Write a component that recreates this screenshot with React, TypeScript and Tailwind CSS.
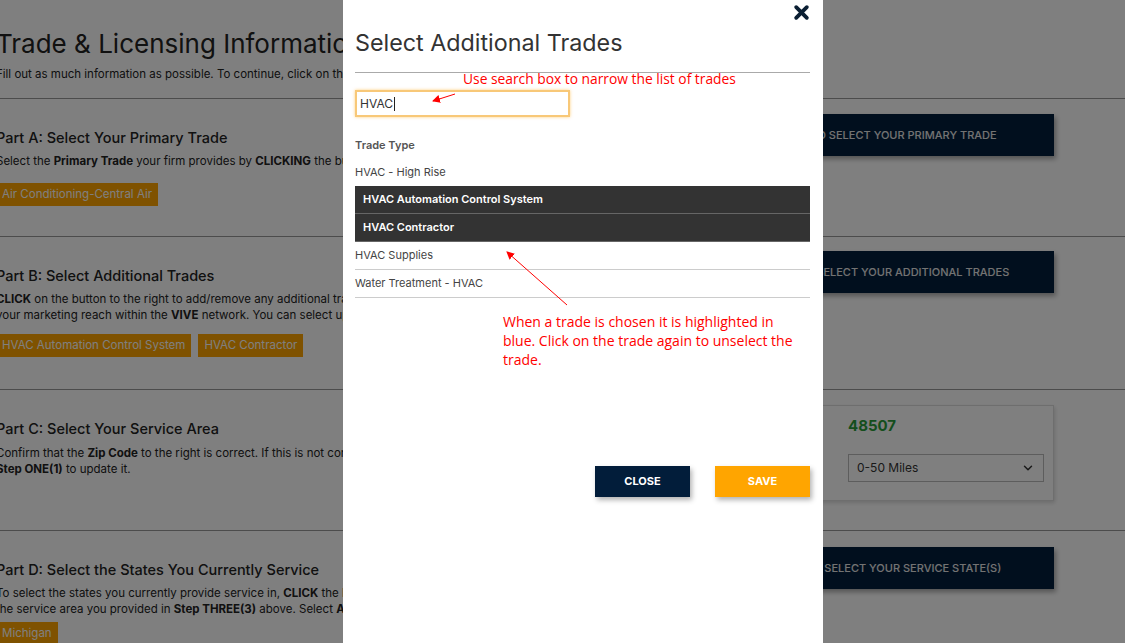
import { ChevronDown } from "lucide-react";

const font = { fontFamily: "Inter, 'Noto Sans', sans-serif" };

function Tag({ children }: { children: React.ReactNode }) {
  return (
    <span className="inline-flex h-[23px] items-center bg-[#ffa500] px-[6px] text-[11.5px] text-white">
      {children}
    </span>
  );
}

function NavyButton({ children }: { children: React.ReactNode }) {
  return (
    <button className="flex h-[42px] w-full items-center justify-center bg-[#021f3d] text-[11px] font-medium uppercase text-[#e6e6e6] shadow-[2px_3px_5px_rgba(0,0,0,0.35)]">
      {children}
    </button>
  );
}

function Background() {
  return (
    <div className="ml-[-4px] w-[1200px] bg-white text-[#222]" style={font}>
      <div className="h-[98px] pt-[29px]">
        <h1 className="text-[26px] font-normal leading-[30px]">Trade &amp; Licensing Information</h1>
        <p className="mt-[7px] text-[11.5px] leading-[16px]">
          Fill out as much information as possible. To continue, click on the <b>NEXT</b> button at the bottom of the page.
        </p>
      </div>

      <section className="flex h-[138px] border-t border-[#999]">
        <div className="w-[690px] pt-[29px]">
          <h2 className="text-[14.5px] font-medium leading-[20px]">Part A: Select Your Primary Trade</h2>
          <p className="mt-[5px] text-[11.5px] leading-[16px]">
            Select the <b>Primary Trade</b> your firm provides by <b>CLICKING</b> the button to the right.
          </p>
          <div className="mt-[11px]">
            <Tag>Air Conditioning-Central Air</Tag>
          </div>
        </div>
        <div className="w-[368px] pt-[15px]">
          <NavyButton>Click here to select your primary trade</NavyButton>
        </div>
      </section>

      <section className="flex h-[153px] border-t border-[#999]">
        <div className="w-[690px] pt-[29px]">
          <h2 className="text-[14.5px] font-medium leading-[20px]">Part B: Select Additional Trades</h2>
          <p className="mt-[5px] text-[11.5px] leading-[16px]">
            <b>CLICK</b> on the button to the right to add/remove any additional trades to increase
            <br />
            your marketing reach within the <b>VIVE</b> network. You can select up to five trades.
          </p>
          <div className="mt-[11px] flex gap-[7px]">
            <Tag>HVAC Automation Control System</Tag>
            <Tag>HVAC Contractor</Tag>
          </div>
        </div>
        <div className="w-[368px] pt-[14px]">
          <NavyButton>Click here to select your additional trades</NavyButton>
        </div>
      </section>

      <section className="flex h-[141px] border-t border-[#999]">
        <div className="w-[690px] pt-[29px]">
          <h2 className="text-[14.5px] font-medium leading-[20px]">Part C: Select Your Service Area</h2>
          <p className="mt-[6px] text-[11.5px] leading-[16px]">
            Confirm that the <b>Zip Code</b> to the right is correct. If this is not correct, go back to
            <br />
            <b>Step ONE(1)</b> to update it.
          </p>
        </div>
        <div className="w-[368px] pt-[15px]">
          <div className="flex h-[96px] flex-col items-end border border-[#ddd] pr-[9px] pt-[10px] shadow-[1px_2px_4px_rgba(0,0,0,0.15)]">
            <div className="w-[196px]">
              <div className="text-[15px] font-bold leading-[20px] text-[#2a9d3a]">48507</div>
              <div className="mt-[18px] flex h-[28px] items-center justify-between border border-[#bbb] px-[8px] text-[12px] text-[#333]">
                <span>0-50 Miles</span>
                <ChevronDown size={14} strokeWidth={2.5} />
              </div>
            </div>
          </div>
        </div>
      </section>

      <section className="flex h-[113px] border-t border-[#999]">
        <div className="w-[690px] pt-[29px]">
          <h2 className="text-[14.5px] font-medium leading-[20px]">Part D: Select the States You Currently Service</h2>
          <p className="mt-[5px] text-[11.5px] leading-[16px]">
            To select the states you currently provide service in, <b>CLICK</b> the button to the right. Include
            <br />
            the service area you provided in <b>Step THREE(3)</b> above. Select <b>ALL</b> that apply.
          </p>
          <div className="mt-[2px]">
            <Tag>Michigan</Tag>
          </div>
        </div>
        <div className="w-[368px] pt-[16px]">
          <NavyButton>Click here to select your service state(s)</NavyButton>
        </div>
      </section>
    </div>
  );
}

const trades = [
  { name: "HVAC - High Rise", selected: false, border: false },
  { name: "HVAC Automation Control System", selected: true, border: true },
  { name: "HVAC Contractor", selected: true, border: true },
  { name: "HVAC Supplies", selected: false, border: true },
  { name: "Water Treatment - HVAC", selected: false, border: true },
];

function Modal() {
  const note = { fontFamily: "'Open Sans', 'Noto Sans', sans-serif" };
  return (
    <div className="absolute left-[343px] top-0 h-[643px] w-[480px] bg-white pl-[12px] pr-[13px]" style={font}>
      <div className="flex h-[25px] justify-end pt-[4px]">
        <svg width="17" height="17" viewBox="0 0 16 16">
          <path d="M3 3 L13 13 M13 3 L3 13" stroke="#0b1f33" strokeWidth="3.6" strokeLinecap="round" />
        </svg>
      </div>
      <h3 className="text-[23.3px] font-normal leading-[36px] text-[#333]">Select Additional Trades</h3>
      <div className="mt-[11px] border-t border-[#aaa]" />
      <div className="relative h-[17px]">
        <span className="absolute left-[108px] top-[-2px] whitespace-nowrap text-[13.8px] leading-[16px] text-[#ff0000]" style={note}>
          Use search box to narrow the list of trades
        </span>
      </div>
      <div className="flex h-[27px] w-[215px] items-center border-2 border-[#f8c878] px-[3px] text-[12px] text-[#333] shadow-[0_0_3px_rgba(255,165,0,0.5)]">
        HVAC<span className="ml-[1px] inline-block h-[14px] w-px bg-[#222]" />
      </div>

      <div className="mt-[16px] text-[11px] font-semibold leading-[24px] text-[#555]">Trade Type</div>
      <div className="mt-[1px]">
        {trades.map((t) => (
          <div
            key={t.name}
            className={`flex h-[28px] items-center text-[11px] ${
              t.selected
                ? "border-b border-[#666] bg-[#333] px-[8px] font-semibold text-white"
                : "text-[#444]"
            } ${t.border && !t.selected ? "border-b border-[#ccc]" : ""}`}
          >
            {t.name}
          </div>
        ))}
      </div>

      <p className="ml-[148px] mt-[14px] whitespace-nowrap text-[14px] leading-[19px] text-[#ff0000]" style={note}>
        When a trade is chosen it is highlighted in
        <br />
        blue. Click on the trade again to unselect the
        <br />
        trade.
      </p>

      <div className="mt-[97px] flex justify-end gap-[25px]">
        <button className="h-[31px] w-[95px] bg-[#021d3a] text-[11px] font-bold text-white shadow-[2px_3px_5px_rgba(0,0,0,0.3)]">
          CLOSE
        </button>
        <button className="h-[31px] w-[95px] bg-[#ffa500] text-[11px] font-bold text-white shadow-[2px_3px_5px_rgba(0,0,0,0.3)]">
          SAVE
        </button>
      </div>

      <svg className="pointer-events-none absolute left-0 top-0" width="480" height="643">
        <defs>
          <marker id="ah" markerWidth="8" markerHeight="8" refX="7" refY="4" orient="auto" markerUnits="userSpaceOnUse">
            <path d="M0 0 L8 4 L0 8 Z" fill="#ff0000" />
          </marker>
        </defs>
        <line x1="112" y1="94" x2="90" y2="101" stroke="#ff0000" strokeWidth="1" markerEnd="url(#ah)" />
        <line x1="224" y1="305" x2="164" y2="252" stroke="#ff0000" strokeWidth="1" markerEnd="url(#ah)" />
      </svg>
    </div>
  );
}

export default function App() {
  return (
    <div className="relative h-[643px] w-[1125px] overflow-hidden bg-white">
      <Background />
      <div className="absolute inset-0 bg-black/50" />
      <Modal />
    </div>
  );
}
